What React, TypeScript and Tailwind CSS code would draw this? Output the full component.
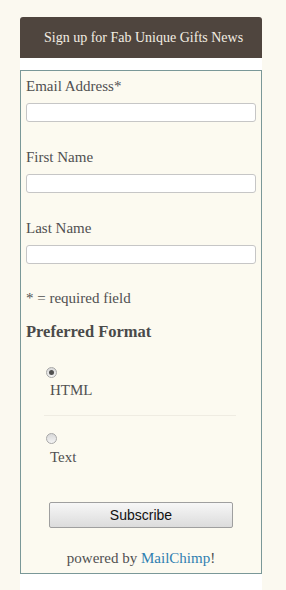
import React from "react";

function Radio({ checked }: { checked?: boolean }) {
  return (
    <div className="w-[11px] h-[11px] rounded-full border border-[#a8a8a8] bg-gradient-to-b from-[#d8d8d8] to-[#f4f4f4] flex items-center justify-center">
      {checked && <div className="w-[5px] h-[5px] rounded-full bg-[#505050]" />}
    </div>
  );
}

function Field({ label, first }: { label: string; first?: boolean }) {
  return (
    <div className={first ? "" : "mt-[25px]"}>
      <div className="h-[20px] leading-[20px] text-[15px]">{label}</div>
      <div className="mt-[7px] h-[19px] w-[230px] rounded-[3px] border border-[#c6c6c6] bg-white" />
    </div>
  );
}

export default function App() {
  return (
    <div
      className="min-h-[590px] bg-[#fbf9f0] pt-[17px] text-[#505050]"
      style={{ fontFamily: '"Liberation Serif", serif' }}
    >
      <div className="ml-[20px] w-[242px] h-[573px] bg-white rounded-t-[3px]">
        <div className="h-[41px] bg-[#4f453e] rounded-t-[3px] flex items-center pl-[24px] text-[14px] text-[#f3eee3]">
          Sign up for Fab Unique Gifts News
        </div>
        <div className="mt-[12px] border border-[#7a9898] bg-[#fcfaf0] pt-[5px] pb-[4px] pl-[5px] h-[504px]">
          <Field label="Email Address*" first />
          <Field label="First Name" />
          <Field label="Last Name" />
          <div className="mt-[24px] h-[20px] leading-[20px] text-[15px]">* = required field</div>
          <div className="mt-[14px] h-[20px] leading-[20px] text-[16.5px] font-bold text-[#4a4a4a]">
            Preferred Format
          </div>
          <div className="mt-[25px] ml-[20px]">
            <Radio checked />
          </div>
          <div className="mt-[2px] ml-[24px] h-[20px] leading-[20px] text-[15px]">HTML</div>
          <div className="mt-[15px] ml-[18px] w-[192px] h-px bg-[#efece2]" />
          <div className="mt-[17px] ml-[20px]">
            <Radio />
          </div>
          <div className="mt-[3px] ml-[24px] h-[20px] leading-[20px] text-[15px]">Text</div>
          <div className="mt-[35px] ml-[23px]">
            <button
              className="w-[184px] h-[26px] rounded-[2px] border border-[#9f9f9f] bg-gradient-to-b from-[#f7f7f7] to-[#dcdcdc] text-[14px] text-[#111]"
              style={{ fontFamily: '"Liberation Sans", Arial, sans-serif' }}
            >
              Subscribe
            </button>
          </div>
          <div className="mt-[20px] h-[20px] leading-[20px] text-[15px] text-center pr-[5px]">
            powered by <span className="text-[#2f7fb0]">MailChimp</span>!
          </div>
        </div>
      </div>
    </div>
  );
}
